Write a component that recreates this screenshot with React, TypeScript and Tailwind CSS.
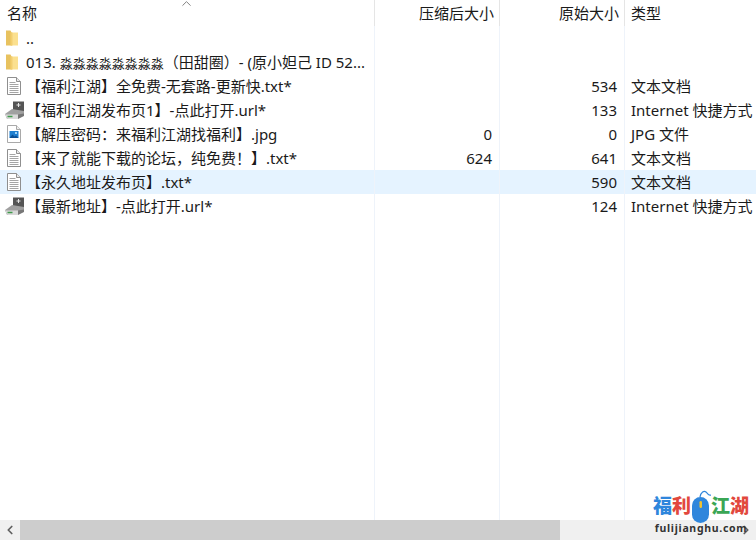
import { ChevronLeft, ChevronRight, ChevronUp } from "lucide-react";

type Kind = "folder" | "txt" | "url" | "jpg";

const rows: { kind: Kind; name: string; packed?: string; size?: string; type?: string; selected?: boolean; small?: string; rest?: string }[] = [
  { kind: "folder", name: ".." },
  { kind: "folder", name: "013. ", small: "淼淼淼淼淼淼淼淼", rest: "（田甜圈）- (原小妲己 ID 52..." },
  { kind: "txt", name: "【福利江湖】全免费-无套路-更新快.txt*", size: "534", type: "文本文档" },
  { kind: "url", name: "【福利江湖发布页1】-点此打开.url*", size: "133", type: "Internet 快捷方式" },
  { kind: "jpg", name: "【解压密码：来福利江湖找福利】.jpg", packed: "0", size: "0", type: "JPG 文件" },
  { kind: "txt", name: "【来了就能下载的论坛，纯免费！】.txt*", packed: "624", size: "641", type: "文本文档" },
  { kind: "txt", name: "【永久地址发布页】.txt*", size: "590", type: "文本文档", selected: true },
  { kind: "url", name: "【最新地址】-点此打开.url*", size: "124", type: "Internet 快捷方式" },
];

function FileIcon({ kind }: { kind: Kind }) {
  if (kind === "folder") {
    return (
      <svg width="16" height="18" viewBox="0 0 16 18">
        <path d="M2 1.500h4.500l1 2H8V16.500H2z" fill="#e8c25f" />
        <path d="M7 3.500h7v13H7z" fill="#fbe08f" />
        <path d="M6.500 3.500h2v13h-2z" fill="#f3cf70" />
      </svg>
    );
  }
  if (kind === "txt") {
    return (
      <svg width="16" height="20" viewBox="0 0 16 20" className="ml-[2px]">
        <path d="M1.500 1.500h9l4 4v13h-13z" fill="#fff" stroke="#8f8f8f" />
        <path d="M10.500 1.500v4h4" fill="#e8e8e8" stroke="#8f8f8f" />
        <path d="M3.500 6.500h6M3.500 8.500h9M3.500 10.500h9M3.500 12.500h9M3.500 14.500h9M3.500 16.500h9" stroke="#a5a5a5" />
      </svg>
    );
  }
  if (kind === "jpg") {
    return (
      <svg width="16" height="20" viewBox="0 0 16 20" className="ml-[2px]">
        <path d="M1.500 1.500h9l4 4v13h-13z" fill="#fff" stroke="#a9a9a9" />
        <path d="M10.500 1.500v4h4" fill="#eee" stroke="#a9a9a9" />
        <path d="M3.500 7h9v7h-9z" fill="#1f7fd0" />
        <path d="M3.500 14l3-3.500 2 2 1.500-1 2.500 2.500z" fill="#0b4f94" />
        <path d="M9 8h2v2H9z" fill="#9fd3f5" />
      </svg>
    );
  }
  return (
    <svg width="22" height="20" viewBox="0 0 22 20">
      <path d="M9 1.500h11v10H9z" fill="#555" />
      <path d="M12.500 5h4M14.500 3v4" stroke="#e6e6e6" />
      <path d="M8 9l12 2v3L8 19H3L1 14z" fill="#a0a0a0" />
      <path d="M1 14.500h13V19H3.500z" fill="#d9d9d9" />
      <path d="M14 14.500l6-1v2.500L14 19z" fill="#777" />
      <path d="M3.500 16.500h5" stroke="#3f9a4b" strokeWidth="1.500" />
    </svg>
  );
}

function Logo() {
  return (
    <div className="absolute left-[654px] top-[490px] flex w-[94px] flex-col items-center">
      <div className="flex h-[33px] items-center text-[19px] font-black leading-none">
        <span className="text-[#2f86dc]">福</span>
        <span className="text-[#e2483d]">利</span>
        <svg width="20" height="33" viewBox="0 0 20 33" className="shrink-0">
          <path d="M9 7C10 2 13 0.500 15 2S17 6 20 5" fill="none" stroke="#2f86dc" strokeWidth="1.200" />
          <rect x="1" y="7" width="17" height="26" rx="8.500" fill="#2f86dc" />
          <rect x="8.500" y="11" width="2.500" height="7" rx="1.200" fill="#f2c230" />
        </svg>
        <span className="text-[#3aa655]">江</span>
        <span className="text-[#e2483d]">湖</span>
      </div>
      <div className="text-[10.5px] font-bold leading-[11px] tracking-[0.7px] text-[#333]">fulijianghu.com</div>
    </div>
  );
}

export default function App() {
  return (
    <div className="relative flex h-[540px] w-[756px] flex-col overflow-hidden bg-white font-['Noto_Sans','Noto_Sans_CJK_SC',sans-serif] text-[15px] text-[#1a1a1a]">
      {/* header */}
      <div className="grid h-[26px] shrink-0 grid-cols-[375px_125px_125px_131px] leading-[26px]">
        <div className="relative border-r border-[#e5e5e5] pl-[7px]">
          名称
          <ChevronUp className="absolute left-[179px] top-[-4px] h-[15px] w-[15px] text-[#777]" strokeWidth={1.5} />
        </div>
        <div className="border-r border-[#e5e5e5] pr-[5px] text-right">压缩后大小</div>
        <div className="border-r border-[#e5e5e5] pr-[5px] text-right">原始大小</div>
        <div className="pl-[6px]">类型</div>
      </div>

      {/* rows */}
      {rows.map((r, i) => (
        <div
          key={i}
          className={`grid h-[24px] shrink-0 grid-cols-[375px_125px_125px_131px] leading-[24px] ${r.selected ? "bg-[#e5f3ff]" : ""}`}
        >
          <div className="flex items-center overflow-hidden whitespace-nowrap border-r border-[#eef3fa] pl-[4px]">
            <span className="flex w-[22px] shrink-0 items-center">
              <FileIcon kind={r.kind} />
            </span>
            <span className="whitespace-pre">
              {r.name}
              {r.small && <span className="text-[13px]">{r.small}</span>}
              {r.rest}
            </span>
          </div>
          <div className="border-r border-[#eef3fa] pr-[7px] text-right">{r.packed}</div>
          <div className="border-r border-[#eef3fa] pr-[7px] text-right">{r.size}</div>
          <div className="whitespace-nowrap pl-[6px]">{r.type}</div>
        </div>
      ))}

      {/* empty space, column lines carry on */}
      <div className="grid flex-1 grid-cols-[375px_125px_125px_131px]">
        <div className="border-r border-[#eef3fa]" />
        <div className="border-r border-[#eef3fa]" />
        <div className="border-r border-[#eef3fa]" />
        <div />
      </div>

      {/* scrollbar */}
      <div className="flex h-[20px] shrink-0 items-center bg-[#f0f0f0]">
        <div className="flex w-[20px] shrink-0 justify-center">
          <ChevronLeft className="h-[14px] w-[14px] text-[#606060]" strokeWidth={3} />
        </div>
        <div className="h-full w-[540px] bg-[#cdcdcd]" />
        <div className="flex flex-1 justify-end pr-[3px]">
          <ChevronRight className="h-[14px] w-[14px] text-[#606060]" strokeWidth={3} />
        </div>
      </div>

      <Logo />
    </div>
  );
}
